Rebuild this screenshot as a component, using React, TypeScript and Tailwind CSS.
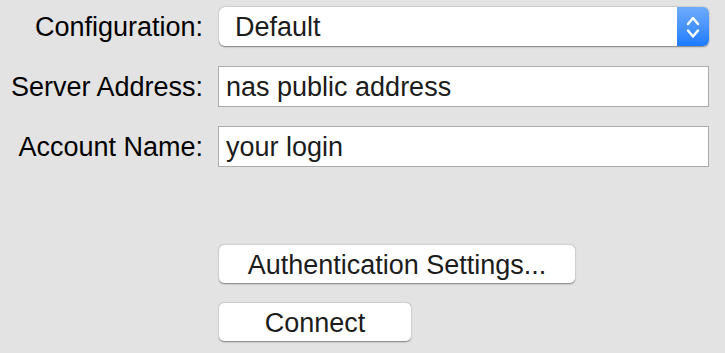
import React from 'react';

const font = { fontFamily: '"Liberation Sans", Arial, sans-serif' };

const Label: React.FC<{ text: string }> = ({ text }) => (
  <div className="flex items-center justify-end pt-[2px] text-[27px] leading-none text-black">{text}</div>
);

const TextField: React.FC<{ value: string }> = ({ value }) => (
  <div className="flex h-[41px] items-center border border-[#ababab] bg-white pl-[7px] pt-[2px] text-[27px] leading-none text-[#1c1c1c]">
    {value}
  </div>
);

const PopUp: React.FC<{ value: string }> = ({ value }) => (
  <div className="ml-px flex h-[39px] overflow-hidden rounded-[6px] bg-white shadow-[0_0.5px_1.5px_rgba(0,0,0,0.45)]">
    <div className="flex flex-1 items-center pl-[16px] pt-[2px] text-[27px] leading-none text-[#1c1c1c]">{value}</div>
    <div className="flex w-[32px] items-center justify-center bg-gradient-to-b from-[#6eabfb] to-[#197bff]">
      <svg width="14" height="24" viewBox="0 0 14 24" fill="none" stroke="white" strokeWidth="2.4" strokeLinecap="round" strokeLinejoin="round">
        <path d="M2 9 L7 3 L12 9" />
        <path d="M2 15.5 L7 21.5 L12 15.5" />
      </svg>
    </div>
  </div>
);

const PushButton: React.FC<{ title: string; className: string }> = ({ title, className }) => (
  <button
    className={`flex h-[38px] items-center justify-center rounded-[5px] bg-white pt-[2px] text-[27px] leading-none text-[#1c1c1c] shadow-[0_0.5px_1.5px_rgba(0,0,0,0.45)] ${className}`}
  >
    {title}
  </button>
);

export default function App() {
  return (
    <div className="h-[353px] w-[725px] bg-[#e3e3e3] pt-[7px]" style={font}>
      <div className="grid grid-cols-[203px_491px] gap-x-[15px]">
        <Label text="Configuration:" />
        <PopUp value="Default" />

        <div className="col-span-2 h-[20px]" />
        <Label text="Server Address:" />
        <TextField value="nas public address" />

        <div className="col-span-2 h-[19px]" />
        <Label text="Account Name:" />
        <TextField value="your login" />

        <div className="col-span-2 h-[78px]" />
        <div />
        <div className="flex flex-col gap-[20px] pl-px">
          <PushButton title="Authentication Settings..." className="w-[356px]" />
          <PushButton title="Connect" className="w-[192px]" />
        </div>
      </div>
    </div>
  );
}
